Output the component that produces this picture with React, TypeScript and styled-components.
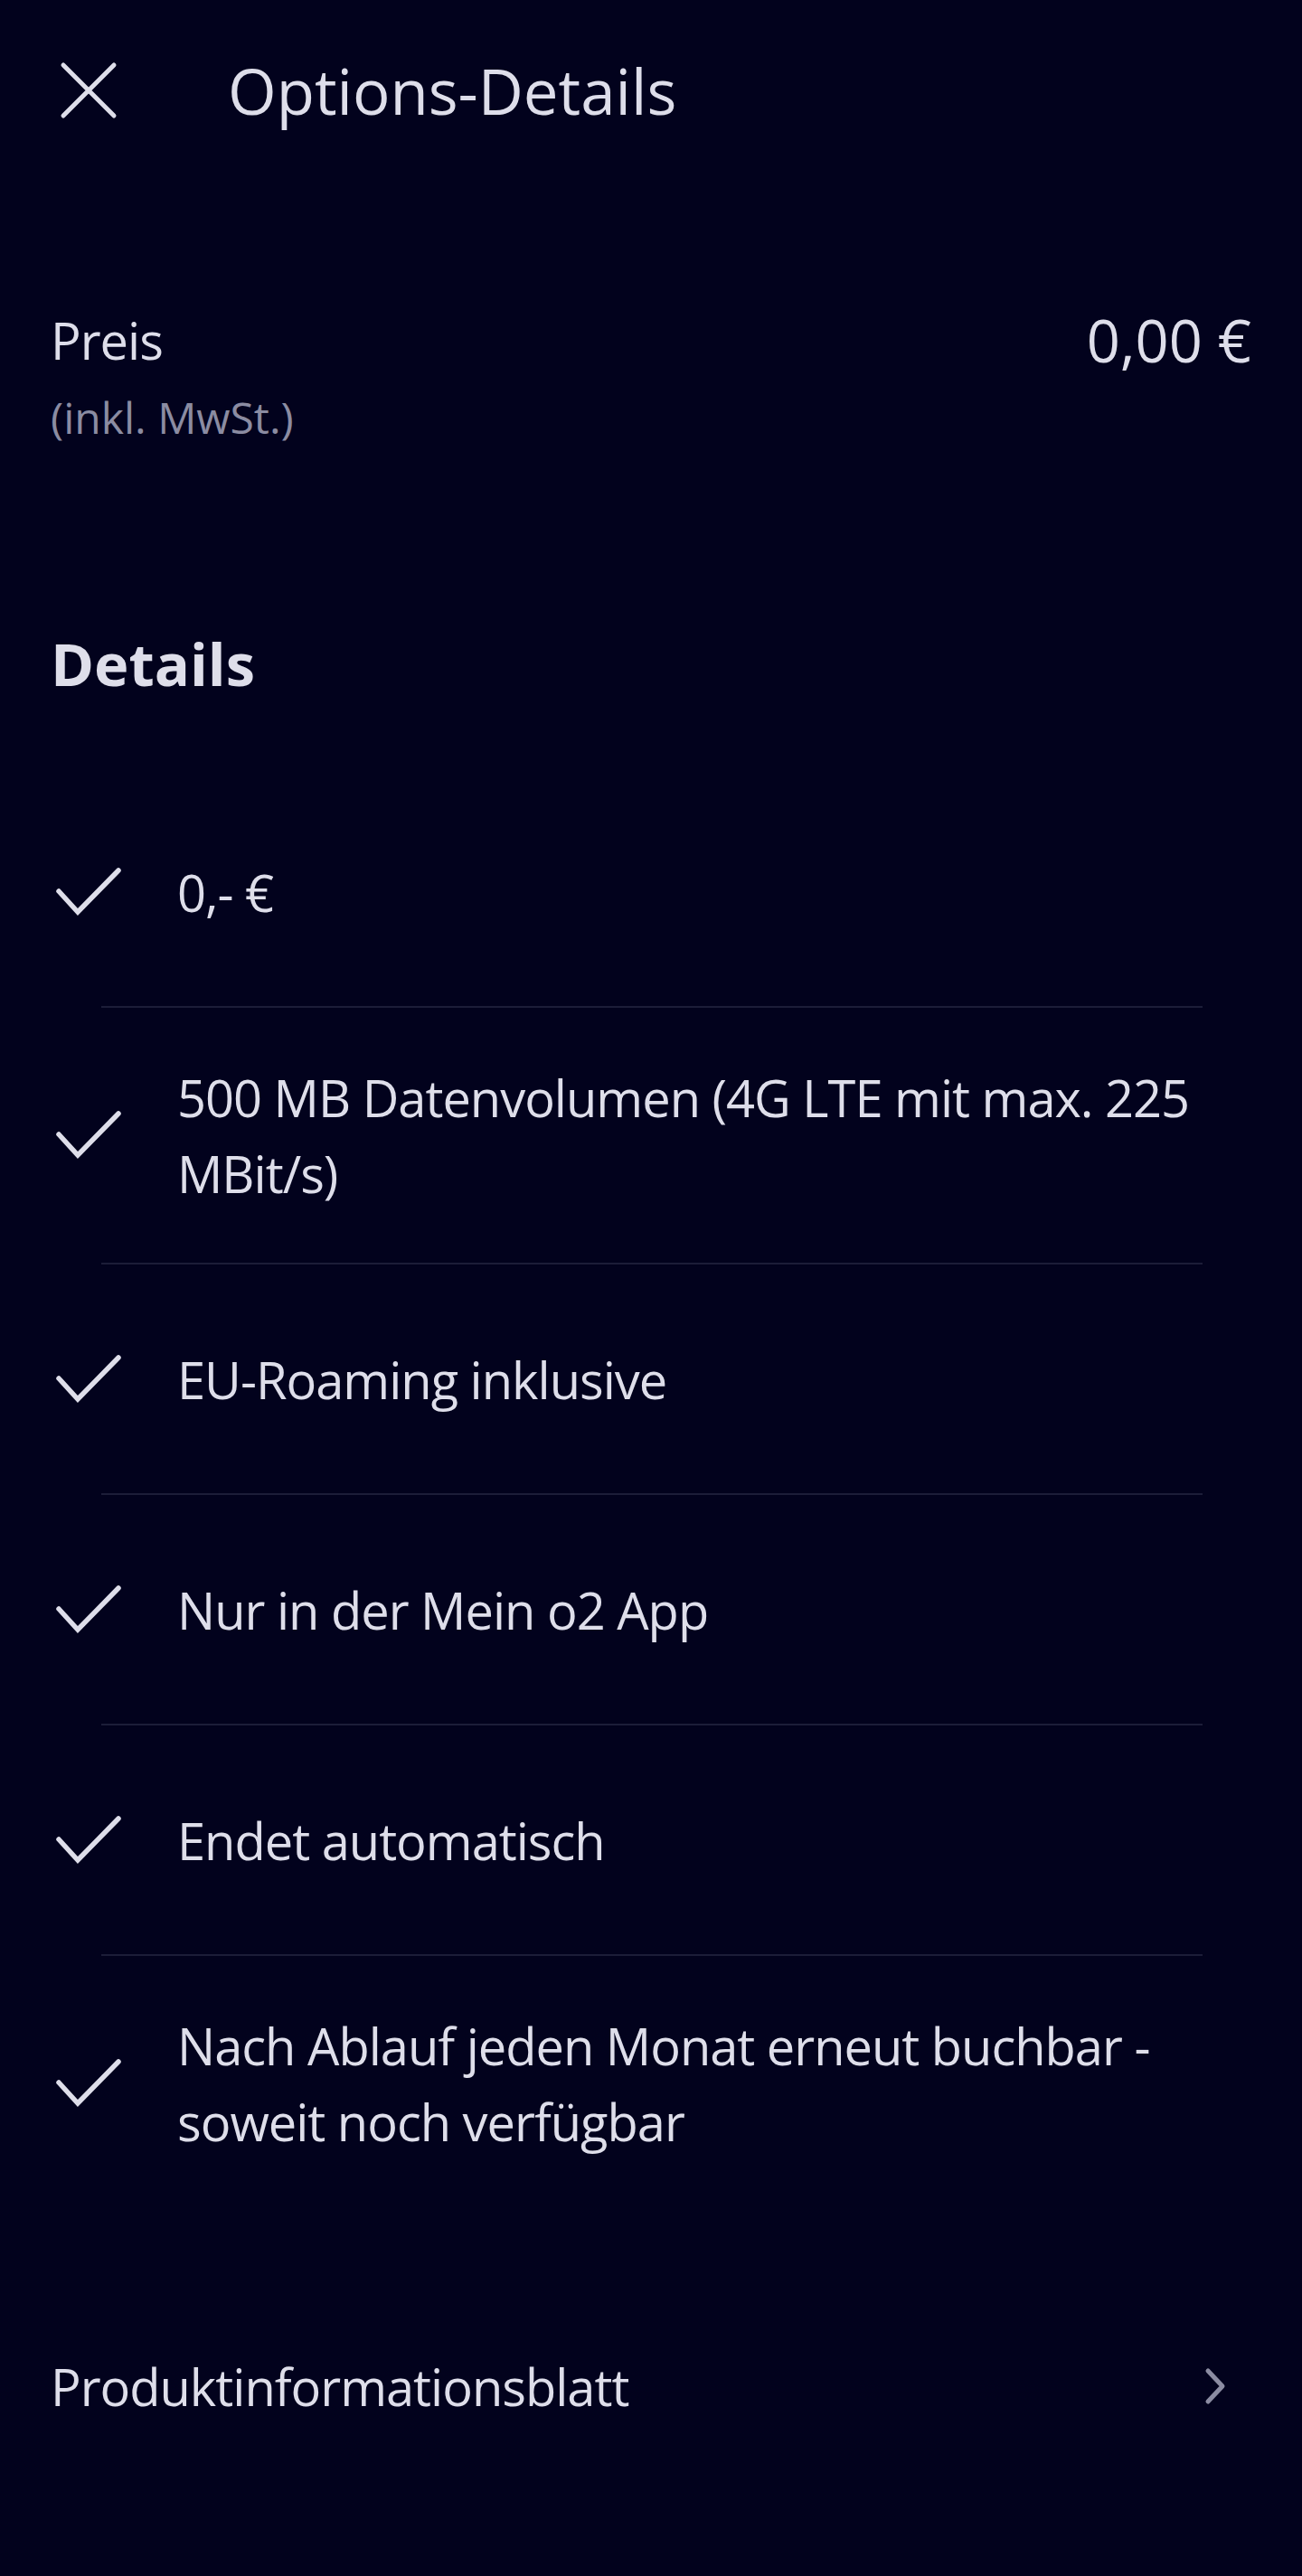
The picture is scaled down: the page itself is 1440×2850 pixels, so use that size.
import React from 'react';
import styled, { createGlobalStyle } from 'styled-components';

const GlobalStyle = createGlobalStyle`
  html, body {
    margin: 0;
    padding: 0;
    background: #02021d;
  }
  body {
    font-family: 'Open Sans', 'Noto Sans', sans-serif;
    color: #dedeea;
  }
`;

const Screen = styled.div`
  width: 1440px;
  min-height: 2850px;
  background: #02021d;
  display: flex;
  flex-direction: column;
`;

const Toolbar = styled.header`
  height: 200px;
  display: flex;
  align-items: center;
  padding: 0 56px;
  gap: 112px;
`;

const IconBox = styled.button`
  width: 84px;
  height: 84px;
  padding: 0;
  border: 0;
  background: none;
  display: flex;
  align-items: center;
  justify-content: center;
  color: #dedeea;
  flex-shrink: 0;
`;

const Title = styled.h1`
  margin: 0;
  font-size: 69px;
  line-height: 80px;
  font-weight: 500;
  color: #dedeea;
`;

const PriceRow = styled.section`
  display: flex;
  justify-content: space-between;
  align-items: flex-start;
  padding: 0 56px;
  margin-top: 134px;
`;

const PriceLabel = styled.div`
  display: flex;
  flex-direction: column;
  gap: 12px;
`;

const Label = styled.span`
  font-size: 56px;
  line-height: 84px;
  letter-spacing: -1px;
`;

const SubLabel = styled.span`
  font-size: 48px;
  line-height: 63px;
  color: #8b8ca2;
`;

const Amount = styled.span`
  font-size: 65px;
  line-height: 84px;
  font-weight: 500;
`;

const Heading = styled.h2`
  margin: 203px 0 0;
  padding: 0 56px;
  font-size: 65px;
  line-height: 76px;
  font-weight: 700;
  color: #dedeea;
`;

const List = styled.ul`
  list-style: none;
  margin: 88px 0 0;
  padding: 0;
  display: flex;
  flex-direction: column;
`;

const Item = styled.li`
  min-height: 253px;
  box-sizing: border-box;
  padding: 57px 56px;
  display: flex;
  align-items: center;
  gap: 56px;
`;

const ItemText = styled.span`
  font-size: 56px;
  line-height: 84px;
  letter-spacing: -1px;
  flex: 1;
`;

const Divider = styled.li`
  height: 2px;
  margin: 0 110px 0 112px;
  background: #1c1d38;
`;

const LinkRow = styled.a`
  margin-top: 68px;
  min-height: 252px;
  padding: 0 55px 0 56px;
  display: flex;
  align-items: center;
  justify-content: space-between;
  color: #dedeea;
  text-decoration: none;
`;

const CloseIcon = () => (
  <svg width="84" height="84" viewBox="0 0 84 84" fill="none">
    <path d="M14 14 L70 70 M70 14 L14 70" stroke="currentColor" strokeWidth="5" strokeLinecap="round" />
  </svg>
);

const CheckIcon = () => (
  <svg width="84" height="84" viewBox="0 0 84 84" fill="none">
    <polyline points="9,41 30,64 75,18" stroke="#dedeea" strokeWidth="5.5" strokeLinecap="round" strokeLinejoin="miter" />
  </svg>
);

const ChevronIcon = () => (
  <svg width="84" height="84" viewBox="0 0 84 84" fill="none">
    <polyline points="35,25 51,42 35,59" stroke="#8b8ca2" strokeWidth="5" strokeLinecap="round" strokeLinejoin="round" />
  </svg>
);

const details = [
  '0,- €',
  '500 MB Datenvolumen (4G LTE mit max. 225 MBit/s)',
  'EU-Roaming inklusive',
  'Nur in der Mein o2 App',
  'Endet automatisch',
  'Nach Ablauf jeden Monat erneut buchbar - soweit noch verfügbar',
];

export default function App() {
  return (
    <>
      <GlobalStyle />
      <Screen>
        <Toolbar>
          <IconBox aria-label="Schließen">
            <CloseIcon />
          </IconBox>
          <Title>Options-Details</Title>
        </Toolbar>

        <PriceRow>
          <PriceLabel>
            <Label>Preis</Label>
            <SubLabel>(inkl. MwSt.)</SubLabel>
          </PriceLabel>
          <Amount>0,00 €</Amount>
        </PriceRow>

        <Heading>Details</Heading>

        <List>
          {details.map((text, i) => (
            <React.Fragment key={text}>
              <Item>
                <CheckIcon />
                <ItemText>{text}</ItemText>
              </Item>
              {i < details.length - 1 && <Divider />}
            </React.Fragment>
          ))}
        </List>

        <LinkRow href="#">
          <Label>Produktinformationsblatt</Label>
          <ChevronIcon />
        </LinkRow>
      </Screen>
    </>
  );
}
